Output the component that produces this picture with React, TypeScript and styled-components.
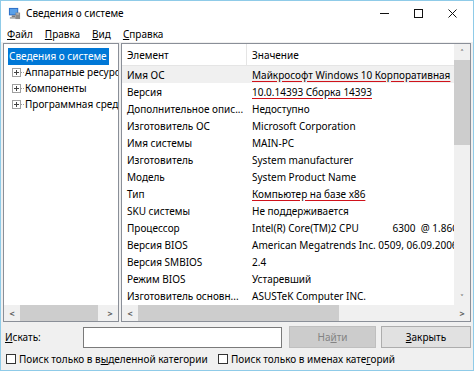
import React from "react";
import styled, { createGlobalStyle } from "styled-components";

const GlobalStyle = createGlobalStyle`
  html, body {
    margin: 0;
    padding: 0;
    background: #ffffff;
  }
  body {
    font-family: "Noto Sans", "Open Sans", "Liberation Sans", sans-serif;
    font-size: 10px;
    color: #000;
  }
`;

const Window = styled.div`
  box-sizing: border-box;
  width: 474px;
  height: 371px;
  border: 1px solid #8fcbe8;
  background: #f0f0f0;
  display: flex;
  flex-direction: column;
  overflow: hidden;
`;

const TitleBar = styled.div`
  height: 24px;
  background: #ffffff;
  display: flex;
  align-items: center;
  padding: 0 4px 0 7px;
`;

const TitleText = styled.span`
  margin-left: 5px;
  flex: 1;
`;

const Controls = styled.div`
  display: flex;
  height: 100%;
`;

const ControlButton = styled.div`
  width: 34px;
  height: 100%;
  display: flex;
  align-items: center;
  justify-content: center;
`;

const MenuBar = styled.div`
  height: 17px;
  background: #ffffff;
  display: flex;
  align-items: center;
  gap: 10px;
  padding-left: 5px;
`;

const MenuItem = styled.span`
  padding: 0 1px;
`;

const Key = styled.span`
  text-decoration: underline;
  text-underline-offset: 1px;
`;

const Body = styled.div`
  flex: 1;
  display: flex;
  flex-direction: column;
  padding: 1px 2px 0 2px;
`;

const Panes = styled.div`
  height: 279px;
  display: flex;
  gap: 2px;
`;

const Pane = styled.div<{ $width?: number }>`
  box-sizing: border-box;
  ${(p) => (p.$width ? `width: ${p.$width}px;` : "flex: 1;")}
  border: 1px solid #8a8f98;
  background: #ffffff;
  display: flex;
  flex-direction: column;
  overflow: hidden;
  min-width: 0;
`;

const Tree = styled.ul`
  list-style: none;
  margin: 0;
  padding: 4px 0 0 4px;
  flex: 1;
  white-space: nowrap;
  overflow: hidden;
`;

const TreeItem = styled.li<{ $selected?: boolean; $child?: boolean }>`
  height: 16px;
  display: flex;
  align-items: center;
  padding-left: ${(p) => (p.$child ? "4px" : "0")};
  span.label {
    padding: 1px 2px 2px 1px;
    background: ${(p) => (p.$selected ? "#0078d7" : "transparent")};
    color: ${(p) => (p.$selected ? "#ffffff" : "#000")};
  }
`;

const Expander = styled.span`
  box-sizing: border-box;
  width: 9px;
  height: 9px;
  border: 1px solid #a0a0a0;
  display: inline-flex;
  align-items: center;
  justify-content: center;
  flex: none;
  position: relative;
  &::before {
    content: "";
    width: 5px;
    height: 1px;
    background: #444;
    position: absolute;
  }
  &::after {
    content: "";
    width: 1px;
    height: 5px;
    background: #444;
    position: absolute;
  }
`;

const Dots = styled.span`
  width: 3px;
  border-top: 1px dotted #a0a0a0;
  flex: none;
`;

const HScroll = styled.div`
  height: 16px;
  flex: none;
  background: #f0f0f0;
  display: flex;
  align-items: center;
  font-size: 9px;
  font-weight: bold;
  color: #606060;
`;

const ScrollArrow = styled.span`
  width: 16px;
  height: 16px;
  display: flex;
  align-items: center;
  justify-content: center;
  flex: none;
`;

const ScrollTrack = styled.div`
  flex: 1;
  height: 100%;
  display: flex;
  align-items: stretch;
`;

const Thumb = styled.div`
  background: #cdcdcd;
  height: 100%;
`;

const ListArea = styled.div`
  flex: 1;
  display: flex;
  min-height: 0;
`;

const Table = styled.div`
  flex: 1;
  min-width: 0;
  overflow: hidden;
`;

const HeaderRow = styled.div`
  height: 21px;
  display: grid;
  grid-template-columns: 125px 1fr;
  border-bottom: 1px solid #e5e5e5;
  align-items: center;
`;

const HeaderCell = styled.div<{ $divider?: boolean }>`
  height: 100%;
  display: flex;
  align-items: center;
  padding-left: 5px;
  border-right: ${(p) => (p.$divider ? "1px solid #e5e5e5" : "none")};
`;

const Row = styled.div<{ $selected?: boolean }>`
  height: 17px;
  display: grid;
  grid-template-columns: 125px 1fr;
  align-items: center;
  background: ${(p) => (p.$selected ? "#f0f0f0" : "transparent")};
  white-space: pre;
`;

const Cell = styled.div`
  padding-left: 5px;
  overflow: hidden;
`;

const Marked = styled.span`
  text-decoration: underline;
  text-decoration-color: #d0121b;
  text-decoration-thickness: 2px;
  text-underline-offset: 2px;
`;

const VScroll = styled.div`
  width: 16px;
  flex: none;
  background: #f0f0f0;
  display: flex;
  flex-direction: column;
  font-size: 9px;
  font-weight: bold;
  color: #606060;
`;

const VTrack = styled.div`
  flex: 1;
  display: flex;
  flex-direction: column;
`;

const VThumb = styled.div`
  background: #cdcdcd;
  height: 85px;
`;

const SearchRow = styled.div`
  display: flex;
  align-items: center;
  margin-top: 4px;
  height: 22px;
`;

const SearchLabel = styled.span`
  width: 78px;
  padding-left: 2px;
  flex: none;
`;

const SearchInput = styled.div`
  box-sizing: border-box;
  width: 199px;
  height: 21px;
  border: 1px solid #7a7a7a;
  background: #fff;
`;

const Button = styled.div<{ $disabled?: boolean; $width: number }>`
  box-sizing: border-box;
  width: ${(p) => p.$width}px;
  height: 22px;
  margin-left: ${(p) => (p.$disabled ? "7px" : "5px")};
  border: 1px solid ${(p) => (p.$disabled ? "#bfbfbf" : "#adadad")};
  background: ${(p) => (p.$disabled ? "#cccccc" : "#e1e1e1")};
  color: ${(p) => (p.$disabled ? "#838383" : "#000")};
  display: flex;
  align-items: center;
  justify-content: center;
`;

const CheckRow = styled.div`
  display: flex;
  align-items: center;
  margin-top: 3px;
  height: 16px;
  padding-left: 3px;
`;

const Check = styled.label<{ $width?: number }>`
  display: flex;
  align-items: center;
  gap: 3px;
  ${(p) => (p.$width ? `width: ${p.$width}px;` : "")}
  flex: none;
`;

const Box = styled.span`
  box-sizing: border-box;
  width: 10px;
  height: 10px;
  border: 1px solid #333333;
  background: #fff;
`;

const AppIcon = () => (
  <svg width="13" height="13" viewBox="0 0 14 14">
    <rect x="1" y="1" width="10" height="8" fill="#2b6cc4" />
    <rect x="2" y="2" width="8" height="6" fill="#5aa0e8" />
    <rect x="4" y="9" width="4" height="2" fill="#7a7a7a" />
    <rect x="2" y="11" width="8" height="1.5" fill="#9a9a9a" />
    <rect x="8" y="6" width="5" height="7" fill="#8a8a8a" />
    <rect x="9" y="7" width="3" height="1" fill="#d0d0d0" />
  </svg>
);

const rows: [string, React.ReactNode][] = [
  ["Имя ОС", <Marked>Майкрософт Windows 10 Корпоративная</Marked>],
  ["Версия", <Marked>10.0.14393 Сборка 14393</Marked>],
  ["Дополнительное опис...", "Недоступно"],
  ["Изготовитель ОС", "Microsoft Corporation"],
  ["Имя системы", "MAIN-PC"],
  ["Изготовитель", "System manufacturer"],
  ["Модель", "System Product Name"],
  ["Тип", <Marked>Компьютер на базе x86</Marked>],
  ["SKU системы", "Не поддерживается"],
  ["Процессор", "Intel(R) Core(TM)2 CPU             6300  @ 1.86GHz"],
  ["Версия BIOS", "American Megatrends Inc. 0509, 06.09.2006"],
  ["Версия SMBIOS", "2.4"],
  ["Режим BIOS", "Устаревший"],
  ["Изготовитель основн...", "ASUSTeK Computer INC."],
];

export default function App() {
  return (
    <>
      <GlobalStyle />
      <Window>
        <TitleBar>
          <AppIcon />
          <TitleText>Сведения о системе</TitleText>
          <Controls>
            <ControlButton>
              <svg width="9" height="9" viewBox="0 0 9 9">
                <line x1="0" y1="4.5" x2="9" y2="4.5" stroke="#111" strokeWidth="1" />
              </svg>
            </ControlButton>
            <ControlButton>
              <svg width="9" height="9" viewBox="0 0 9 9">
                <rect x="0.5" y="0.5" width="8" height="8" fill="none" stroke="#111" strokeWidth="1" />
              </svg>
            </ControlButton>
            <ControlButton>
              <svg width="9" height="9" viewBox="0 0 9 9">
                <path d="M0.5 0.5 L8.5 8.5 M8.5 0.5 L0.5 8.5" stroke="#111" strokeWidth="1" />
              </svg>
            </ControlButton>
          </Controls>
        </TitleBar>
        <MenuBar>
          <MenuItem><Key>Ф</Key>айл</MenuItem>
          <MenuItem><Key>П</Key>равка</MenuItem>
          <MenuItem><Key>В</Key>ид</MenuItem>
          <MenuItem><Key>С</Key>правка</MenuItem>
        </MenuBar>
        <Body>
          <Panes>
            <Pane $width={116}>
              <Tree>
                <TreeItem $selected>
                  <span className="label">Сведения о системе</span>
                </TreeItem>
                <TreeItem $child>
                  <Expander />
                  <Dots />
                  <span className="label">Аппаратные ресурсы</span>
                </TreeItem>
                <TreeItem $child>
                  <Expander />
                  <Dots />
                  <span className="label">Компоненты</span>
                </TreeItem>
                <TreeItem $child>
                  <Expander />
                  <Dots />
                  <span className="label">Программная среда</span>
                </TreeItem>
              </Tree>
              <HScroll>
                <ScrollArrow>&lt;</ScrollArrow>
                <ScrollTrack>
                  <Thumb style={{ width: 78 }} />
                </ScrollTrack>
                <ScrollArrow>&gt;</ScrollArrow>
              </HScroll>
            </Pane>
            <Pane>
              <ListArea>
                <Table>
                  <HeaderRow>
                    <HeaderCell $divider>Элемент</HeaderCell>
                    <HeaderCell>Значение</HeaderCell>
                  </HeaderRow>
                  {rows.map(([k, v], i) => (
                    <Row key={k} $selected={i === 0}>
                      <Cell>{k}</Cell>
                      <Cell>{v}</Cell>
                    </Row>
                  ))}
                </Table>
                <VScroll>
                  <ScrollArrow>˄</ScrollArrow>
                  <VTrack>
                    <VThumb />
                  </VTrack>
                  <ScrollArrow>˅</ScrollArrow>
                </VScroll>
              </ListArea>
              <HScroll>
                <ScrollArrow>&lt;</ScrollArrow>
                <ScrollTrack>
                  <Thumb style={{ width: 201 }} />
                </ScrollTrack>
                <ScrollArrow>&gt;</ScrollArrow>
              </HScroll>
            </Pane>
          </Panes>
          <SearchRow>
            <SearchLabel><Key>И</Key>скать:</SearchLabel>
            <SearchInput />
            <Button $disabled $width={87}>На<Key>й</Key>ти</Button>
            <Button $width={90}><Key>З</Key>акрыть</Button>
          </SearchRow>
          <CheckRow>
            <Check $width={212}>
              <Box />
              <span>Поиск только в в<Key>ы</Key>деленной категории</span>
            </Check>
            <Check>
              <Box />
              <span>Поиск только в именах кате<Key>г</Key>орий</span>
            </Check>
          </CheckRow>
        </Body>
      </Window>
    </>
  );
}
